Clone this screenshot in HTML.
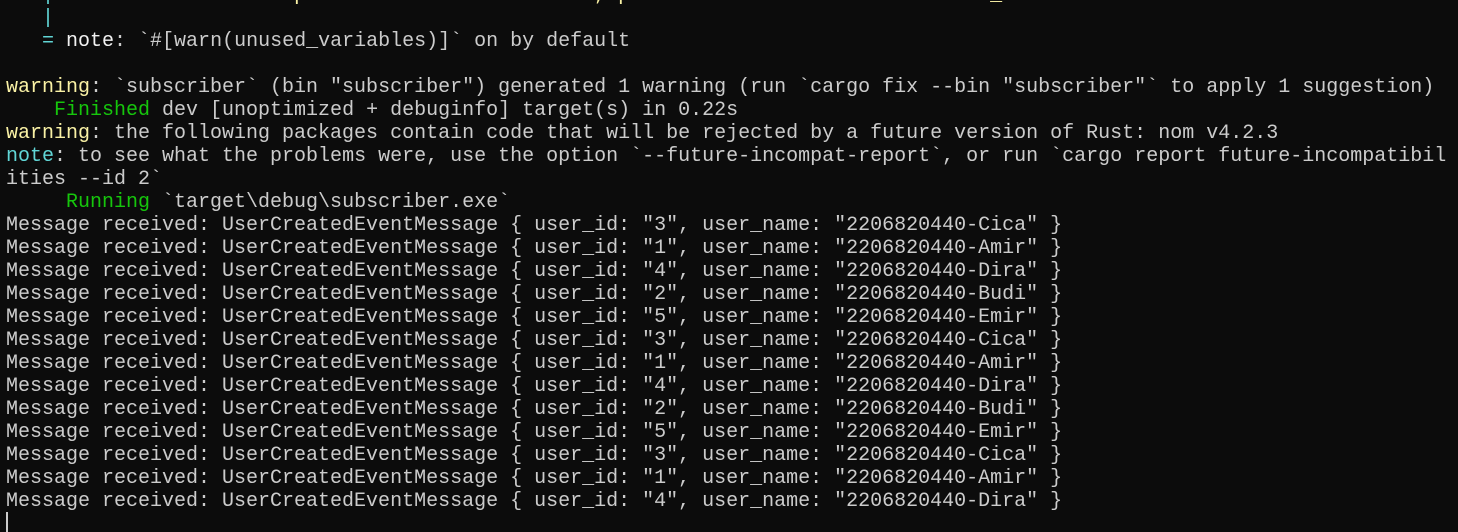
<!DOCTYPE html>
<html><head><meta charset="utf-8"><style>
html,body{margin:0;padding:0;background:#0c0c0c;width:1458px;height:532px;overflow:hidden}
pre{margin:0;position:absolute;left:6px;top:-16px;font-family:"Liberation Mono","DejaVu Sans Mono",monospace;font-size:20px;line-height:23px;color:#cccccc;white-space:pre}
.y{color:#f9f1a5}.c{color:#61d6d6}.g{color:#16c60c}.w{color:#f2f2f2}
.cur{position:absolute;left:6px;top:512px;width:2px;height:20px;background:#cccccc}
</style></head><body>
<pre><span class="c">   |</span>                 <span class="y">help: if this is intentional, prefix it with an underscore: `_now`</span>
<span class="c">   |</span>
<span class="c">   =</span> <span class="w">note</span>: `#[warn(unused_variables)]` on by default

<span class="y">warning</span>: `subscriber` (bin "subscriber") generated 1 warning (run `cargo fix --bin "subscriber"` to apply 1 suggestion)
    <span class="g">Finished</span> dev [unoptimized + debuginfo] target(s) in 0.22s
<span class="y">warning</span>: the following packages contain code that will be rejected by a future version of Rust: nom v4.2.3
<span class="c">note</span>: to see what the problems were, use the option `--future-incompat-report`, or run `cargo report future-incompatibil
ities --id 2`
     <span class="g">Running</span> `target\debug\subscriber.exe`
Message received: UserCreatedEventMessage { user_id: "3", user_name: "2206820440-Cica" }
Message received: UserCreatedEventMessage { user_id: "1", user_name: "2206820440-Amir" }
Message received: UserCreatedEventMessage { user_id: "4", user_name: "2206820440-Dira" }
Message received: UserCreatedEventMessage { user_id: "2", user_name: "2206820440-Budi" }
Message received: UserCreatedEventMessage { user_id: "5", user_name: "2206820440-Emir" }
Message received: UserCreatedEventMessage { user_id: "3", user_name: "2206820440-Cica" }
Message received: UserCreatedEventMessage { user_id: "1", user_name: "2206820440-Amir" }
Message received: UserCreatedEventMessage { user_id: "4", user_name: "2206820440-Dira" }
Message received: UserCreatedEventMessage { user_id: "2", user_name: "2206820440-Budi" }
Message received: UserCreatedEventMessage { user_id: "5", user_name: "2206820440-Emir" }
Message received: UserCreatedEventMessage { user_id: "3", user_name: "2206820440-Cica" }
Message received: UserCreatedEventMessage { user_id: "1", user_name: "2206820440-Amir" }
Message received: UserCreatedEventMessage { user_id: "4", user_name: "2206820440-Dira" }</pre>
<div class="cur"></div>
</body></html>
